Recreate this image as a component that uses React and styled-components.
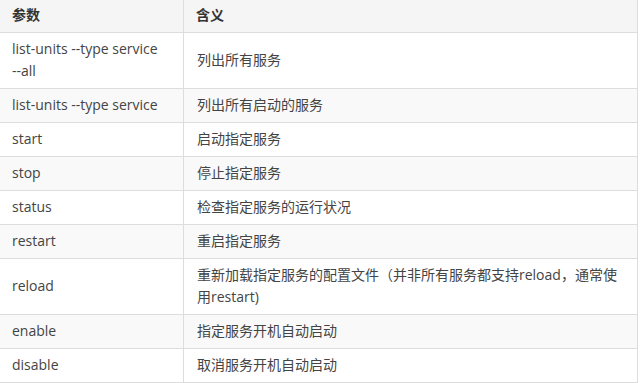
import React from "react";
import styled, { createGlobalStyle } from "styled-components";

const Global = createGlobalStyle`
  html, body { margin: 0; padding: 0; background: #ffffff; }
  body { font-family: "Open Sans", "Noto Sans CJK SC", sans-serif; }
`;

const Table = styled.table`
  width: 638px;
  border-collapse: collapse;
  table-layout: fixed;
  font-family: "Open Sans", "Noto Sans CJK SC", sans-serif;
  font-size: 14px;
  line-height: 22px;
  color: #444444;
  border-right: 1px solid #dddddd;
  border-bottom: 1px solid #dddddd;
`;

const HeadRow = styled.tr`
  background: #f5f5f5;
`;

const Th = styled.th`
  text-align: left;
  font-weight: 700;
  color: #333333;
  padding: 4px 12px 6px 12px;
  border-bottom: 1px solid #dddddd;
  border-left: ${(p) => (p.$first ? "none" : "1px solid #dddddd")};
  width: ${(p) => (p.$first ? "159px" : "auto")};
`;

const Row = styled.tr`
  background: ${(p) => (p.$striped ? "#f9f9f9" : "#ffffff")};
`;

const Td = styled.td`
  padding: 5px 12px 6px 12px;
  vertical-align: middle;
  border-bottom: 1px solid #dddddd;
  border-left: ${(p) => (p.$first ? "none" : "1px solid #dddddd")};
  padding-left: ${(p) => (p.$first ? "12px" : "13px")};
`;

const NoWrap = styled.span`
  white-space: nowrap;
`;

const rows = [
  [<>list-units --type service <NoWrap>--all</NoWrap></>, "列出所有服务"],
  ["list-units --type service", "列出所有启动的服务"],
  ["start", "启动指定服务"],
  ["stop", "停止指定服务"],
  ["status", "检查指定服务的运行状况"],
  ["restart", "重启指定服务"],
  ["reload", "重新加载指定服务的配置文件（并非所有服务都支持reload，通常使用restart)"],
  ["enable", "指定服务开机自动启动"],
  ["disable", "取消服务开机自动启动"],
];

export default function App() {
  return (
    <>
      <Global />
      <Table>
        <thead>
          <HeadRow>
            <Th $first>参数</Th>
            <Th>含义</Th>
          </HeadRow>
        </thead>
        <tbody>
          {rows.map(([a, b], i) => (
            <Row key={i} $striped={i % 2 === 1}>
              <Td $first>{a}</Td>
              <Td>{b}</Td>
            </Row>
          ))}
        </tbody>
      </Table>
    </>
  );
}
